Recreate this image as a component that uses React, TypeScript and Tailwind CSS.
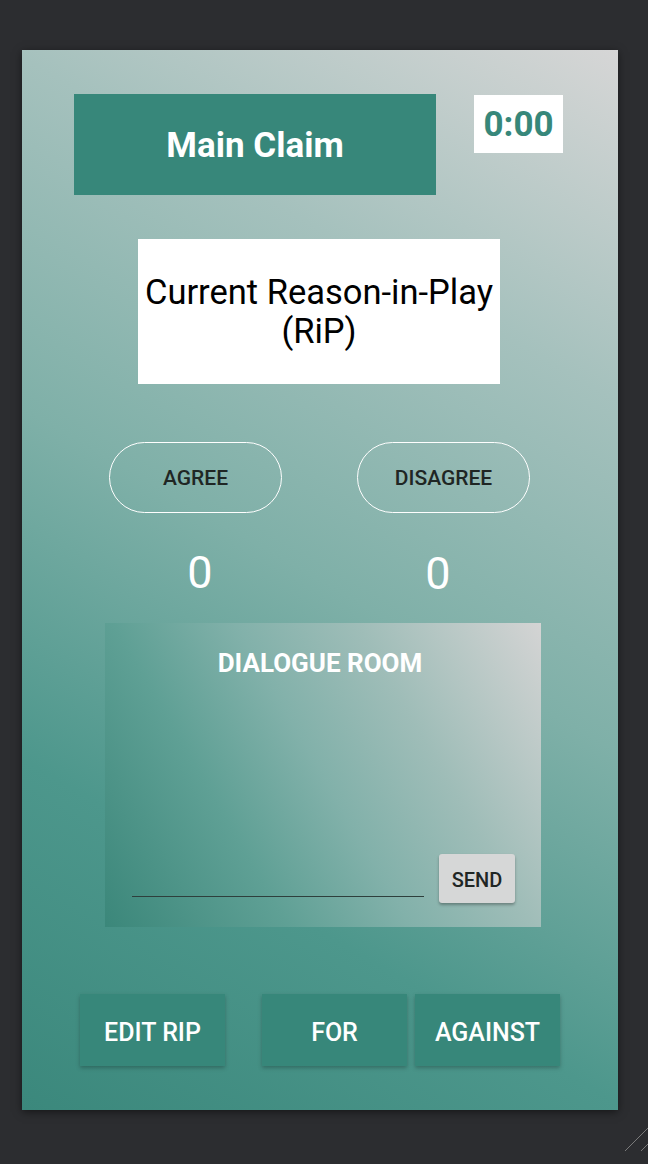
import React from "react";

export default function App() {
  return (
    <div
      className="relative w-[648px] h-[1164px] bg-[#2c2d30] pt-[50px] pl-[22px] overflow-hidden"
      style={{ fontFamily: "Roboto, 'Noto Sans', sans-serif" }}
    >
      <div className="w-[596px] h-[1060px] flex flex-col bg-[linear-gradient(30deg,#3b887c_0%,#4d978c_25%,#7fb0a8_50%,#a5c1bd_75%,#d6d6d6_100%)] shadow-[0_2px_8px_rgba(0,0,0,0.5)]">
        {/* Top row */}
        <div className="flex mt-[44px]">
          <div className="ml-[52px] w-[362px] h-[101px] pt-[4px] bg-[#37877a] flex items-center justify-center text-white font-bold text-[35px]">
            Main Claim
          </div>
          <div className="ml-[38px] mt-[1px] w-[89px] h-[58px] pt-[3px] bg-white flex items-center justify-center text-[#37877a] font-bold text-[35px]">
            0:00
          </div>
        </div>

        {/* RiP */}
        <div className="mt-[44px] ml-[116px] w-[362px] h-[145px] pt-[1px] bg-white flex items-center justify-center text-center text-black text-[34.5px] leading-[39px]">
          Current Reason-in-Play
          <br />
          (RiP)
        </div>

        {/* Agree / disagree */}
        <div className="flex mt-[58px]">
          <button className="ml-[87px] w-[173px] h-[71px] pt-[3px] rounded-full border-[1.5px] border-white text-[#1f2624] font-medium text-[21px] flex items-center justify-center">
            AGREE
          </button>
          <button className="ml-[75px] w-[173px] h-[71px] pt-[3px] rounded-full border-[1.5px] border-white text-[#1f2624] font-medium text-[21px] flex items-center justify-center">
            DISAGREE
          </button>
        </div>

        {/* Counts */}
        <div className="flex h-[110px] items-center pt-[8px]">
          <div className="ml-[158px] w-[40px] text-center text-white text-[45px] leading-none">0</div>
          <div className="ml-[198px] w-[40px] text-center text-white text-[45px] leading-none mt-[3px]">0</div>
        </div>

        {/* Dialogue room */}
        <div className="ml-[83px] w-[436px] h-[304px] flex flex-col bg-[linear-gradient(60deg,#3b877a_0%,#5fa095_30%,#82b1aa_50%,#9fbdb8_70%,#d4d4d4_100%)]">
          <div className="pt-[25px] text-center text-white font-bold text-[26px] leading-[30px] pr-[6px]">
            DIALOGUE ROOM
          </div>
          <div className="flex-1" />
          <div className="flex items-end pb-[24px]">
            <div className="ml-[27px] w-[292px] mb-[6px] border-b border-[#2e3f3c]" />
            <button className="ml-[15px] w-[76px] h-[49px] pt-[2px] bg-[#d6d7d7] rounded-[3px] shadow-[0_2px_3px_rgba(0,0,0,0.3)] text-[#1f2624] font-medium text-[20px] flex items-center justify-center">
              SEND
            </button>
          </div>
        </div>

        {/* Bottom buttons */}
        <div className="flex mt-[67px]">
          <button className="ml-[58px] w-[145px] h-[72px] pt-[5px] bg-[#37877a] shadow-[0_2px_4px_rgba(0,0,0,0.25)] text-white font-medium text-[25px] flex items-center justify-center">
            EDIT RIP
          </button>
          <button className="ml-[37px] w-[145px] h-[72px] pt-[5px] bg-[#37877a] shadow-[0_2px_4px_rgba(0,0,0,0.25)] text-white font-medium text-[25px] flex items-center justify-center">
            FOR
          </button>
          <button className="ml-[8px] w-[145px] h-[72px] pt-[5px] bg-[#37877a] shadow-[0_2px_4px_rgba(0,0,0,0.25)] text-white font-medium text-[25px] flex items-center justify-center">
            AGAINST
          </button>
        </div>
      </div>

      {/* resize handle */}
      <svg className="absolute right-0 bottom-0" width="30" height="40" viewBox="0 0 30 40">
        <line x1="7" y1="27" x2="30" y2="4" stroke="#7a7a7a" strokeWidth="1" />
        <line x1="23" y1="27" x2="30" y2="20" stroke="#7a7a7a" strokeWidth="1" />
      </svg>
    </div>
  );
}
